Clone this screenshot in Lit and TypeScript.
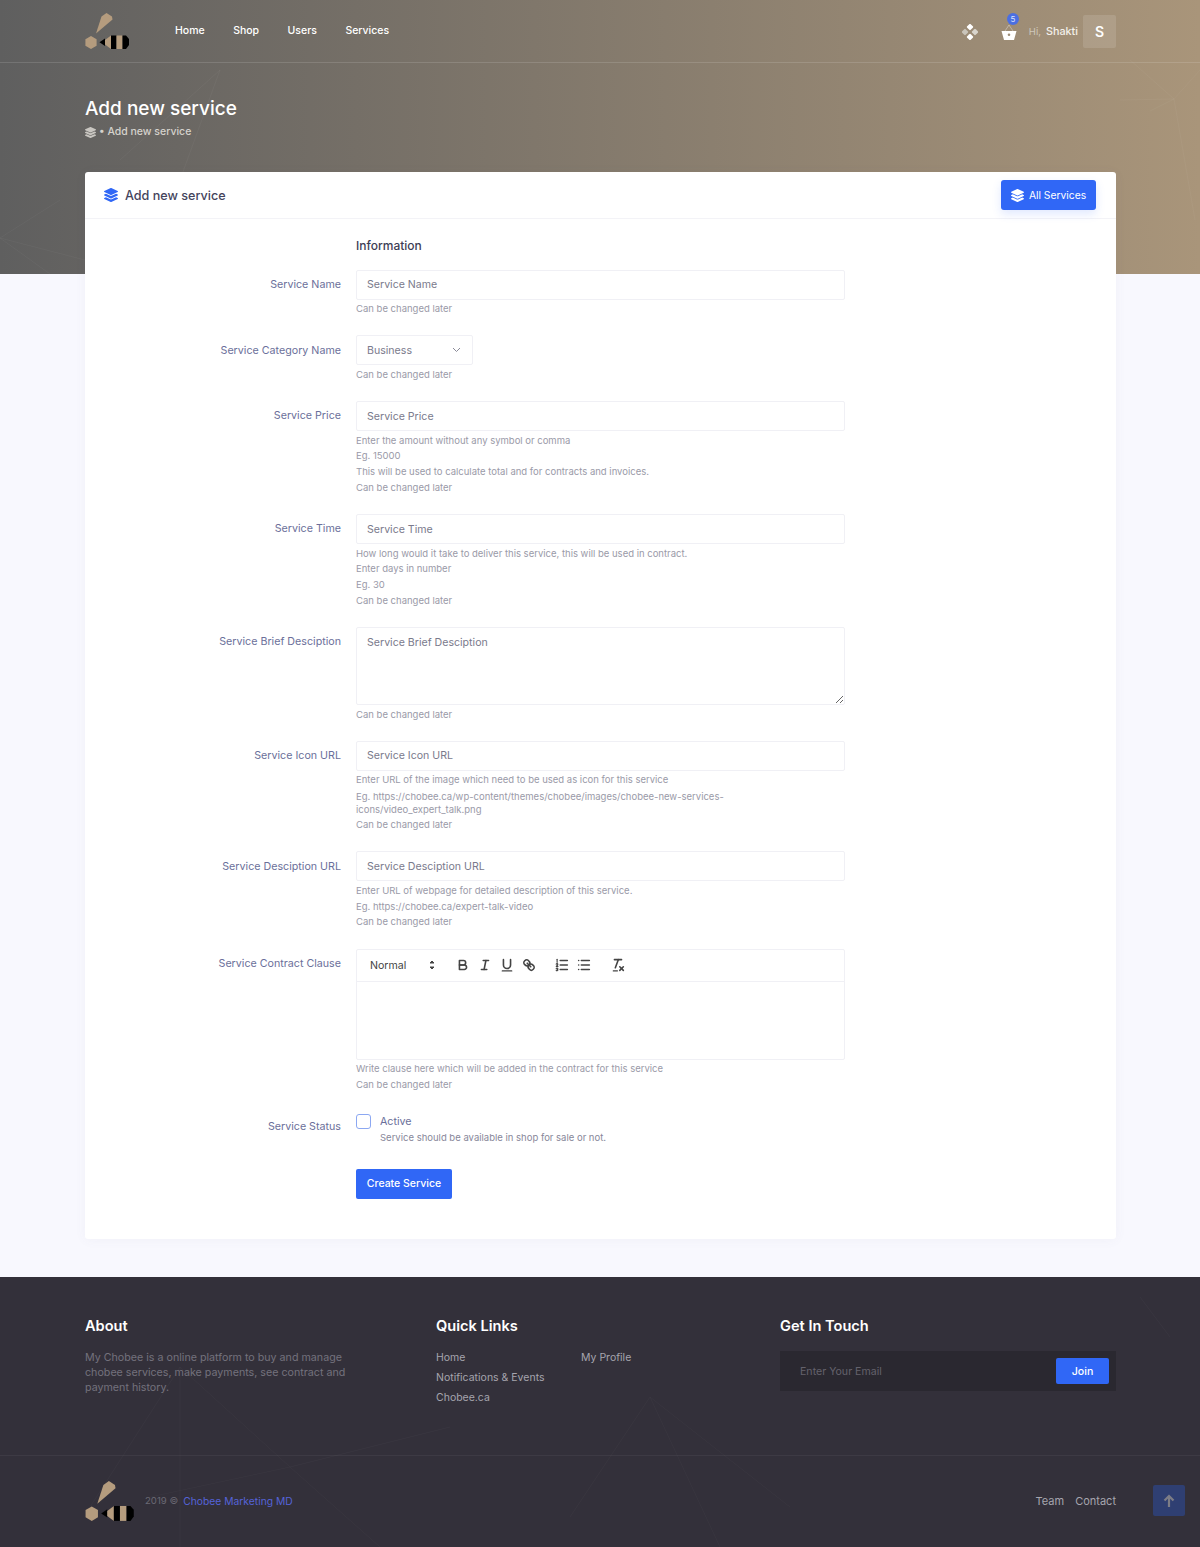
import { LitElement, html, css, svg } from "lit";
import { customElement } from "lit/decorators.js";

const layers = (cls: string) => html`<svg class=${cls} viewBox="0 0 512 512" fill="currentColor"><path d="M12.41 148.02l232.94 105.67c6.8 3.09 14.49 3.09 21.29 0l232.94-105.67c16.55-7.51 16.55-32.52 0-40.03L266.65 2.31a25.607 25.607 0 0 0-21.29 0L12.41 107.98c-16.55 7.51-16.55 32.53 0 40.04zm487.18 88.28l-58.09-26.33-161.64 73.27c-7.56 3.43-15.59 5.17-23.86 5.17s-16.29-1.74-23.86-5.17L70.51 209.97l-58.1 26.33c-16.55 7.5-16.55 32.5 0 40l232.94 105.59c6.8 3.08 14.49 3.08 21.29 0L499.59 276.3c16.55-7.5 16.55-32.5 0-40zm0 127.8l-57.87-26.23-161.86 73.37c-7.56 3.43-15.59 5.17-23.86 5.17s-16.29-1.74-23.86-5.17L70.29 337.87 12.41 364.1c-16.55 7.5-16.55 32.5 0 40l232.94 105.59c6.8 3.08 14.49 3.08 21.29 0L499.59 404.1c16.55-7.5 16.55-32.5 0-40z"/></svg>`;

const logo = (cls: string) => html`<svg class=${cls} viewBox="85 12 45 38">
  <path fill="#b59c7e" d="M96 33.5L101.5 16.5L106.5 13L112 16.5L112.5 19.5Z"/>
  <path fill="#b59c7e" d="M91 36L96.6 39.2V45.8L91 49L85.4 45.8V39.2Z"/>
  <path fill="#000" d="M99.5 42.2L105 38.5V46Z"/>
  <path fill="#b59c7e" d="M105 40L111 35.5V49L105 44.5Z"/>
  <rect fill="#000" x="111" y="35.5" width="5.5" height="13.5"/>
  <rect fill="#b59c7e" x="116.5" y="35.5" width="6" height="13.5"/>
  <path fill="#000" d="M122.5 35.5H126L129 39V45L126 49H122.5Z"/>
</svg>`;

const net = (lines: number[][], color: string) => svg`${lines.map(
  (l) => svg`<line x1=${l[0]} y1=${l[1]} x2=${l[2]} y2=${l[3]} stroke=${color} stroke-width="1"/>`
)}`;

interface Row { label: string; ph: string; kind?: string; help: string[]; }
const rows: Row[] = [
  { label: "Service Name", ph: "Service Name", help: ["Can be changed later"] },
  { label: "Service Category Name", ph: "Business", kind: "select", help: ["Can be changed later"] },
  { label: "Service Price", ph: "Service Price", help: ["Enter the amount without any symbol or comma", "Eg. 15000", "This will be used to calculate total and for contracts and invoices.", "Can be changed later"] },
  { label: "Service Time", ph: "Service Time", help: ["How long would it take to deliver this service, this will be used in contract.", "Enter days in number", "Eg. 30", "Can be changed later"] },
  { label: "Service Brief Desciption", ph: "Service Brief Desciption", kind: "area", help: ["Can be changed later"] },
  { label: "Service Icon URL", ph: "Service Icon URL", help: ["Enter URL of the image which need to be used as icon for this service", "Eg. https://chobee.ca/wp-content/themes/chobee/images/chobee-new-services-icons/video_expert_talk.png", "Can be changed later"] },
  { label: "Service Desciption URL", ph: "Service Desciption URL", help: ["Enter URL of webpage for detailed description of this service.", "Eg. https://chobee.ca/expert-talk-video", "Can be changed later"] },
];

const q = (body: unknown) => html`<span class="qbtn"><svg viewBox="0 0 18 18" class="qi">${body}</svg></span>`;

@customElement("app-root")
export class AppRoot extends LitElement {
  static styles = css`
    :host { display: block; width: 1200px; background: #f8f8fe; font-family: Inter, "Liberation Sans", sans-serif; color: #6b6f9a; }
    * { box-sizing: border-box; }
    .hero { position: relative; height: 274px; background: linear-gradient(90deg, #5f5f5f 0%, #a9957a 100%); overflow: hidden; color: #fff; }
    .deco { position: absolute; inset: 0; width: 100%; height: 100%; pointer-events: none; }
    .nav { position: relative; height: 63px; border-bottom: 1px solid rgba(255,255,255,.13); padding: 0 84px 2px 85px; display: flex; align-items: center; }
    .logo { width: 45px; height: 38px; display: block; margin-top: 1px; }
    .links { display: flex; margin-left: 45px; gap: 28.5px; font-size: 10.5px; font-weight: 500; }
    .right { margin-left: auto; margin-top: 3px; display: flex; align-items: center; }
    .dots { width: 16px; height: 16px; display: block; margin-right: 23px; }
    .cartwrap { position: relative; width: 16px; height: 18px; margin-right: 12px; }
    .cart { width: 16px; height: 18px; display: block; }
    .badge { position: absolute; left: 6px; top: -10px; width: 12px; height: 12px; border-radius: 50%; background: #4b6fe2; color: #dfe5fb; font-size: 8px; line-height: 12px; text-align: center; }
    .hi { font-size: 9.5px; color: #cfc8bb; margin-right: 5px; }
    .who { font-size: 10.8px; font-weight: 500; color: #f3f0ea; margin-right: 5px; }
    .avatar { width: 33px; height: 33px; border-radius: 2px; background: rgba(255,255,255,.12); display: flex; align-items: center; justify-content: center; font-size: 14px; font-weight: 600; }
    .title { position: relative; padding: 34px 85px 0; }
    h1 { margin: 0; font-size: 19px; line-height: 24px; font-weight: 500; }
    .crumb { display: flex; align-items: center; margin-top: 4px; font-size: 10.5px; font-weight: 500; line-height: 14px; color: #d5d2cc; }
    .ci { width: 11px; height: 11px; margin-right: 3px; color: #c9c6c1; }
    main { position: relative; margin: -102px 0 0; padding: 0 84px 38px 85px; }
    .card { background: #fff; border-radius: 3px; box-shadow: 0 1px 12px rgba(90,90,140,.05); height: 1067px; }
    .chead { height: 47px; border-bottom: 1px solid #f3f3f7; display: flex; align-items: center; padding: 0 20px 0 19px; }
    .hi-icon { width: 14px; height: 14px; color: #3067f6; margin-right: 7px; }
    .chead h2 { margin: 0; font-size: 12.6px; font-weight: 500; color: #44445c; }
    .allbtn { margin-left: auto; width: 95px; height: 30px; border-radius: 3px; background: #3067f6; color: #fff; display: flex; align-items: center; justify-content: center; font-size: 10.3px; box-shadow: 0 4px 10px rgba(48,103,246,.15); }
    .bi { width: 13px; height: 13px; margin-right: 5px; }
    .form { padding-top: 18px; }
    .info { margin-left: 271px; font-size: 12px; line-height: 18px; font-weight: 500; color: #3d3d55; margin-bottom: 14.6px; }
    .row { display: grid; grid-template-columns: 256px 489px; column-gap: 15px; margin-bottom: 18.5px; }
    .lab { text-align: right; font-size: 10.7px; line-height: 16px; padding-top: 7.3px; color: #6b6f9a; }
    .ctl { display: block; width: 100%; height: 30px; border: 1px solid #f0f0f5; border-radius: 2px; background: #fff; padding: 0 10px; font: 10.6px Inter, sans-serif; color: #7a7a8c; outline: none; }
    .ctl::placeholder { color: #7a7a8c; opacity: 1; }
    textarea.ctl { height: 78px; padding-top: 7px; line-height: 16px; resize: vertical; }
    .sel { width: 117px; display: flex; align-items: center; justify-content: space-between; padding: 0 11px 0 10px; }
    .chev { width: 9px; height: 6px; }
    .help { margin-top: 1.5px; font-size: 9.5px; line-height: 15.75px; color: #9a9aa8; }
    .help .tight { line-height: 13px; padding: 1.5px 0; }
    .editor { border: 1px solid #f0f0f5; border-radius: 2px; height: 111px; }
    .tb { height: 32px; border-bottom: 1px solid #f0f0f5; display: flex; align-items: center; padding-left: 8px; }
    .pick { width: 76px; display: flex; align-items: center; justify-content: space-between; padding-left: 5px; font-size: 10.6px; color: #444; margin-right: 10.5px; }
    .pick svg { width: 18px; height: 18px; }
    .grp { display: flex; margin-right: 11.5px; }
    .qbtn { width: 22px; height: 24px; display: flex; align-items: center; justify-content: center; }
    .qi { width: 16px; height: 16px; fill: none; stroke: #444; stroke-width: 1.8; stroke-linecap: round; stroke-linejoin: round; }
    .qi .f { fill: #444; stroke: none; }
    .qi .t { stroke-width: 1.3; }
    .status { display: grid; grid-template-columns: 256px 489px; column-gap: 15px; margin-top: 21.25px; }
    .status .lab { padding-top: 5px; }
    .chk { display: grid; grid-template-columns: 16px 1fr; column-gap: 8px; }
    .box { width: 15px; height: 15px; border: 1.5px solid #8ca8f2; border-radius: 3px; margin-top: .5px; }
    .act { font-size: 10.7px; line-height: 16px; }
    .sub { grid-column: 2; font-size: 9.5px; line-height: 16px; color: #87879a; }
    .create { margin: 23px 0 0 271px; width: 96px; height: 30px; border-radius: 2px; background: #3067f6; color: #fff; font-size: 10.5px; font-weight: 500; display: flex; align-items: center; justify-content: center; }
    footer { position: relative; height: 270px; background: #33303a; overflow: hidden; }
    .ftop { position: relative; height: 179px; border-bottom: 1px solid rgba(255,255,255,.05); display: grid; grid-template-columns: 351px 344px 336px; padding: 40px 0 0 85px; }
    h3 { margin: 0 0 15px; font-size: 14.6px; line-height: 19px; font-weight: 600; color: #fff; }
    .about { font-size: 10.7px; line-height: 15px; color: #74727d; width: 265px; margin: -1px 0 0; }
    .fl { display: grid; grid-template-columns: 145px 1fr; font-size: 10.5px; line-height: 20px; color: #a6a5ae; margin-top: -3px; }
    .sub-form { height: 40px; background: #2a2830; display: flex; align-items: center; padding: 0 7px 0 20px; font-size: 10.6px; color: #64626c; }
    .join { margin-left: auto; width: 53px; height: 26px; border-radius: 2px; background: #3067f6; color: #fff; display: flex; align-items: center; justify-content: center; font-weight: 500; }
    .fbot { position: relative; padding: 24px 84px 0 85px; display: flex; align-items: center; font-size: 10.3px; color: #6a6873; }
    .flogo { width: 50px; height: 42px; display: block; margin-right: 10px; }
    .fcopy { display: flex; gap: 5px; }
    .fcopy span { font-size: 9.6px; }
    .fcopy b { font-weight: 400; color: #5563d8; }
    .fr { margin-left: auto; display: flex; gap: 11px; font-size: 11px; color: #a6a5ae; }
    .top { position: absolute; left: 1153px; top: 208px; width: 32px; height: 31px; border-radius: 2px; background: #2f3f72; display: flex; align-items: center; justify-content: center; }
    .top svg { width: 12px; height: 13px; }
  `;

  private field(r: Row) {
    if (r.kind === "area") return html`<textarea class="ctl" placeholder=${r.ph}></textarea>`;
    if (r.kind === "select")
      return html`<div class="ctl sel"><span>${r.ph}</span><svg class="chev" viewBox="0 0 9 6" fill="none" stroke="#8a8a98" stroke-width="1"><path d="M1 1L4.5 4.5L8 1"/></svg></div>`;
    return html`<input class="ctl" placeholder=${r.ph} />`;
  }

  private row(r: Row) {
    return html`<div class="row">
      <div class="lab">${r.label}</div>
      <div>${this.field(r)}
        <div class="help">${r.help.map((h) => html`<div class=${h.length > 90 ? "tight" : ""}>${h}</div>`)}</div>
      </div>
    </div>`;
  }

  render() {
    return html`
      <section class="hero">
        <svg class="deco" viewBox="0 0 1200 274">
          ${net([[1174,99,1200,70],[1174,99,1130,60],[1174,99,1150,111],[1174,99,1195,220],[1174,99,1120,100],[220,70,120,160],[220,70,180,180],[0,238,60,200],[0,238,85,260],[0,238,50,274]], "rgba(255,255,255,.035)")}
        </svg>
        <div class="nav">
          ${logo("logo")}
          <div class="links"><span>Home</span><span>Shop</span><span>Users</span><span>Services</span></div>
          <div class="right">
            <svg class="dots" viewBox="0 0 16 16">
              <rect x="5.5" y="0.5" width="5" height="5" rx="1" transform="rotate(45 8 3)" fill="#fff"/>
              <rect x="5.5" y="10.5" width="5" height="5" rx="1" transform="rotate(45 8 13)" fill="#fff"/>
              <rect x="0.5" y="5.5" width="5" height="5" rx="1" transform="rotate(45 3 8)" fill="#c9c4ba"/>
              <rect x="10.5" y="5.5" width="5" height="5" rx="1" transform="rotate(45 13 8)" fill="#d8d4cc"/>
            </svg>
            <div class="cartwrap">
              <svg class="cart" viewBox="0 0 16 18">
                <path d="M4 8L8 2L12 8" fill="none" stroke="rgba(255,255,255,.35)" stroke-width="1"/>
                <path fill="#fff" fill-rule="evenodd" d="M0.5 8H15.5L13 17H3ZM8 10.5a1.3 1.3 0 1 0 0 2.6a1.3 1.3 0 1 0 0-2.6Z"/>
              </svg>
              <span class="badge">5</span>
            </div>
            <span class="hi">Hi,</span><span class="who">Shakti</span>
            <div class="avatar">S</div>
          </div>
        </div>
        <div class="title">
          <h1>Add new service</h1>
          <div class="crumb">${layers("ci")}<span>• Add new service</span></div>
        </div>
      </section>
      <main>
        <div class="card">
          <div class="chead">
            ${layers("hi-icon")}<h2>Add new service</h2>
            <div class="allbtn">${layers("bi")}All Services</div>
          </div>
          <div class="form">
            <div class="info">Information</div>
            ${rows.map((r) => this.row(r))}
            <div class="row">
              <div class="lab">Service Contract Clause</div>
              <div>
                <div class="editor">
                  <div class="tb">
                    <div class="pick"><span>Normal</span><svg viewBox="0 0 18 18"><polygon points="7 11 9 13 11 11" fill="#444" stroke="#444"/><polygon points="7 7 9 5 11 7" fill="#444" stroke="#444"/></svg></div>
                    <div class="grp">
                      ${q(svg`<path d="M5,4H9.5A2.5,2.5,0,0,1,12,6.5v0A2.5,2.5,0,0,1,9.5,9H5A0,0,0,0,1,5,9V4A0,0,0,0,1,5,4Z"/><path d="M5,9h5.5A2.5,2.5,0,0,1,13,11.5v0A2.5,2.5,0,0,1,10.5,14H5a0,0,0,0,1,0,0V9A0,0,0,0,1,5,9Z"/>`)}
                      ${q(svg`<line x1="7" x2="13" y1="4" y2="4"/><line x1="5" x2="11" y1="14" y2="14"/><line x1="8" x2="10" y1="14" y2="4"/>`)}
                      ${q(svg`<path d="M5,3V9a4,4,0,0,0,4,4H9a4,4,0,0,0,4-4V3"/><rect class="f" x="3" y="15" width="12" height="1.4" rx=".5"/>`)}
                      ${q(svg`<line x1="7" x2="11" y1="7" y2="11"/><path d="M8.9,4.577a3.476,3.476,0,0,1,.36,4.679A3.476,3.476,0,0,1,4.577,8.9C3.185,7.5,2.035,6.4,4.217,4.217S7.5,3.185,8.9,4.577Z"/><path d="M13.423,9.1a3.476,3.476,0,0,0-4.679-.36,3.476,3.476,0,0,0,.36,4.679c1.392,1.392,2.5,2.542,4.679.36S14.815,10.5,13.423,9.1Z"/>`)}
                    </div>
                    <div class="grp">
                      ${q(svg`<line x1="7" x2="15" y1="4" y2="4"/><line x1="7" x2="15" y1="9" y2="9"/><line x1="7" x2="15" y1="14" y2="14"/><path class="t" d="M3.5 2.5V6"/><path class="t" d="M4.5,10.5h-2c0-.234,1.85-1.076,1.85-2.234A.959.959,0,0,0,2.5,8.156"/><path class="t" d="M2.5,14.846a.959.959,0,0,0,1.85-.109A.7.7,0,0,0,3.75,14a.688.688,0,0,0,.6-.736.959.959,0,0,0-1.85-.109"/>`)}
                      ${q(svg`<line x1="6" x2="15" y1="4" y2="4"/><line x1="6" x2="15" y1="9" y2="9"/><line x1="6" x2="15" y1="14" y2="14"/><line x1="3" x2="3" y1="4" y2="4"/><line x1="3" x2="3" y1="9" y2="9"/><line x1="3" x2="3" y1="14" y2="14"/>`)}
                    </div>
                    <div class="grp">
                      ${q(svg`<line x1="5" x2="13" y1="3" y2="3"/><line x1="6" x2="9.35" y1="12" y2="3"/><line x1="11" x2="15" y1="11" y2="15"/><line x1="15" x2="11" y1="11" y2="15"/><rect class="f" x="3" y="15" width="6" height="1.2" rx=".5"/>`)}
                    </div>
                  </div>
                </div>
                <div class="help"><div>Write clause here which will be added in the contract for this service</div><div>Can be changed later</div></div>
              </div>
            </div>
            <div class="status">
              <div class="lab">Service Status</div>
              <div class="chk">
                <span class="box"></span><span class="act">Active</span>
                <span class="sub">Service should be available in shop for sale or not.</span>
              </div>
            </div>
            <div class="create">Create Service</div>
          </div>
        </div>
      </main>
      <footer>
        <svg class="deco" viewBox="0 0 1200 270">
          ${net([[180,90,290,190],[180,90,90,230],[180,90,180,270],[290,190,150,220],[290,190,450,150],[290,190,380,270],[650,120,570,240],[650,120,720,270],[650,120,790,230],[1140,20,1170,60]], "rgba(255,255,255,.025)")}
        </svg>
        <div class="ftop">
          <div>
            <h3>About</h3>
            <p class="about">My Chobee is a online platform to buy and manage chobee services, make payments, see contract and payment history.</p>
          </div>
          <div>
            <h3>Quick Links</h3>
            <div class="fl"><span>Home</span><span>My Profile</span><span>Notifications &amp; Events</span><span></span><span>Chobee.ca</span></div>
          </div>
          <div>
            <h3>Get In Touch</h3>
            <div class="sub-form"><span>Enter Your Email</span><span class="join">Join</span></div>
          </div>
        </div>
        <div class="fbot">
          ${logo("flogo")}
          <div class="fcopy"><span>2019 ©</span><b>Chobee Marketing MD</b></div>
          <div class="fr"><span>Team</span><span>Contact</span></div>
        </div>
        <div class="top"><svg viewBox="0 0 12 13" fill="none" stroke="#7d7d86" stroke-width="2.2"><path d="M6 13V2M1.5 6.5L6 2L10.5 6.5"/></svg></div>
      </footer>
    `;
  }
}
